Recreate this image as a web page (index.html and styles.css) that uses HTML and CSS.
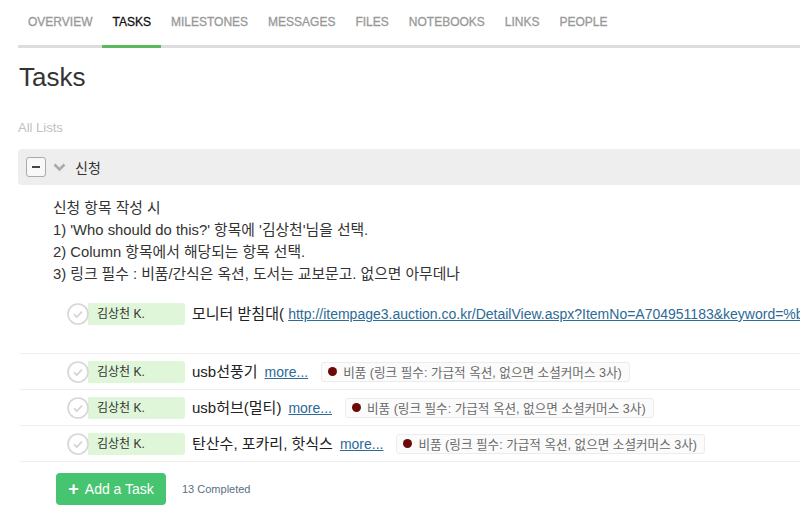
FILE: index.html
```html
<!DOCTYPE html>
<html lang="ko">

<head>
  <meta charset="UTF-8">
  <meta name="viewport" content="width=device-width, initial-scale=1">
  <title>Tasks</title>
  <link rel="stylesheet" href="styles.css">
</head>

<body>

  <nav class="tabs">
    <a class="tab">Overview</a>
    <a class="tab active">Tasks</a>
    <a class="tab">Milestones</a>
    <a class="tab">Messages</a>
    <a class="tab">Files</a>
    <a class="tab">Notebooks</a>
    <a class="tab">Links</a>
    <a class="tab">People</a>
  </nav>

  <h1 class="page-title">Tasks</h1>
  <p class="all-lists">All Lists</p>

  <div class="list-head">
    <span class="toggle"><span></span></span>
    <svg class="chevron" width="13" height="9" viewBox="0 0 13 9">
      <path d="M1.5 1.5 L6.5 6.5 L11.5 1.5" fill="none" stroke="#aaa" stroke-width="2.6" />
    </svg>
    <span class="list-name">신청</span>
  </div>

  <div class="list-desc">
    <p>신청 항목 작성 시</p>
    <p>1) 'Who should do this?' 항목에 '김상천'님을 선택.</p>
    <p>2) Column 항목에서 해당되는 항목 선택.</p>
    <p>3) 링크 필수 : 비품/간식은 옥션, 도서는 교보문고. 없으면 아무데나</p>
  </div>

  <ul class="tasks">
    <li class="task first">
      <span class="check">
        <svg width="22" height="22" viewBox="0 0 22 22">
          <circle cx="11" cy="11" r="10" fill="#fff" stroke="#d6d6d6" stroke-width="1.6" />
          <path d="M7 11.3 L9.8 14 L15 8.6" fill="none" stroke="#d4d4d4" stroke-width="1.8" />
        </svg>
      </span>
      <span class="who">김상천 K.</span>
      <span class="title">모니터 받침대( <a class="url" href="#">http://itempage3.auction.co.kr/DetailView.aspx?ItemNo=A704951183&amp;keyword=%b8</a></span>
    </li>
    <li class="task">
      <span class="check">
        <svg width="22" height="22" viewBox="0 0 22 22">
          <circle cx="11" cy="11" r="10" fill="#fff" stroke="#d6d6d6" stroke-width="1.6" />
          <path d="M7 11.3 L9.8 14 L15 8.6" fill="none" stroke="#d4d4d4" stroke-width="1.8" />
        </svg>
      </span>
      <span class="who">김상천 K.</span>
      <span class="title">usb선풍기</span>
      <a class="more" href="#">more...</a>
      <span class="label"><i></i>비품 (링크 필수: 가급적 옥션, 없으면 소셜커머스 3사)</span>
    </li>
    <li class="task">
      <span class="check">
        <svg width="22" height="22" viewBox="0 0 22 22">
          <circle cx="11" cy="11" r="10" fill="#fff" stroke="#d6d6d6" stroke-width="1.6" />
          <path d="M7 11.3 L9.8 14 L15 8.6" fill="none" stroke="#d4d4d4" stroke-width="1.8" />
        </svg>
      </span>
      <span class="who">김상천 K.</span>
      <span class="title">usb허브(멀티)</span>
      <a class="more" href="#">more...</a>
      <span class="label"><i></i>비품 (링크 필수: 가급적 옥션, 없으면 소셜커머스 3사)</span>
    </li>
    <li class="task">
      <span class="check">
        <svg width="22" height="22" viewBox="0 0 22 22">
          <circle cx="11" cy="11" r="10" fill="#fff" stroke="#d6d6d6" stroke-width="1.6" />
          <path d="M7 11.3 L9.8 14 L15 8.6" fill="none" stroke="#d4d4d4" stroke-width="1.8" />
        </svg>
      </span>
      <span class="who">김상천 K.</span>
      <span class="title">탄산수, 포카리, 핫식스</span>
      <a class="more" href="#">more...</a>
      <span class="label"><i></i>비품 (링크 필수: 가급적 옥션, 없으면 소셜커머스 3사)</span>
    </li>
  </ul>

  <div class="list-foot">
    <button class="add-task"><span class="plus">+</span> Add a Task</button>
    <span class="completed">13 Completed</span>
  </div>

</body>

</html>
```

FILE: styles.css
```css
* {
  box-sizing: border-box;
  margin: 0;
  padding: 0;
}

body {
  font-family: "Liberation Sans", "Noto Sans CJK KR", sans-serif;
  color: #333;
  background: #fff;
  width: 800px;
  overflow: hidden;
}

/* project tabs */
.tabs {
  display: flex;
  margin-left: 18px;
  border-bottom: 3px solid #ddd;
  height: 48px;
}

.tab {
  padding: 0 10px;
  line-height: 45px;
  font-size: 12px;
  text-transform: uppercase;
  color: #999;
  border-bottom: 3px solid transparent;
  margin-bottom: -3px;
  -webkit-text-stroke: 0.3px #999;
}

.tab.active {
  color: #111;
  -webkit-text-stroke: 0.3px #111;
  border-bottom-color: #5cb85c;
}

.page-title {
  font-size: 26px;
  font-weight: normal;
  color: #333;
  margin: 13px 0 0 19px;
  line-height: 32px;
}

.all-lists {
  font-size: 13px;
  color: #c0c0c0;
  margin: 27px 0 0 18px;
}

/* list header bar */
.list-head {
  display: flex;
  align-items: center;
  height: 36px;
  margin: 14px 0 0 18px;
  padding-left: 8px;
  background: #eee;
  border-radius: 4px 0 0 4px;
}

.toggle {
  width: 20px;
  height: 20px;
  border: 1px solid #aaa;
  border-radius: 3px;
  background: #f8f8f8;
  display: flex;
  align-items: center;
  justify-content: center;
}

.toggle span {
  width: 8px;
  height: 2px;
  background: #444;
}

.chevron {
  margin-left: 7px;
}

.list-name {
  margin-left: 9px;
  font-size: 14px;
  color: #333;
}

.list-desc {
  margin: 12px 0 0 53px;
  font-size: 14.8px;
  line-height: 22px;
  color: #333;
}

/* task rows */
.tasks {
  list-style: none;
  margin: 11px 0 0 20px;
}

.task {
  display: flex;
  align-items: center;
  height: 36px;
  padding-left: 47px;
  border-bottom: 1px solid #efefef;
  white-space: nowrap;
  overflow: hidden;
}

.task.first {
  height: 58px;
  align-items: flex-start;
  padding-top: 7px;
}

.check {
  flex-shrink: 0;
  width: 22px;
  height: 22px;
  position: relative;
  z-index: 1;
}

.check svg {
  display: block;
}

.who {
  flex-shrink: 0;
  display: block;
  width: 97px;
  height: 22px;
  line-height: 22px;
  margin-left: -1px;
  padding-left: 9px;
  font-size: 12px;
  color: #333;
  background: #dff7d8;
  border-radius: 0 3px 3px 0;
}

.title {
  flex-shrink: 0;
  margin-left: 7px;
  font-size: 15px;
  color: #222;
  line-height: 22px;
}

.url {
  font-size: 14px;
  color: #2d6a96;
}

.more {
  flex-shrink: 0;
  margin-left: 7px;
  font-size: 14px;
  color: #2d6a96;
}

.label {
  flex-shrink: 0;
  display: flex;
  align-items: center;
  height: 20px;
  margin-left: 13px;
  padding: 0 7px 0 6px;
  font-size: 12.6px;
  color: #6a6a6a;
  background: #fbfbfb;
  border: 1px solid #ececec;
  border-radius: 3px;
}

.label i {
  width: 9px;
  height: 9px;
  margin-right: 6px;
  border-radius: 50%;
  background: #6b0808;
}

/* footer */
.list-foot {
  display: flex;
  align-items: center;
  margin: 11px 0 0 56px;
}

.add-task {
  width: 110px;
  height: 32px;
  border: none;
  border-radius: 4px;
  background: #46c46f;
  color: #fff;
  font-family: inherit;
  font-size: 14px;
}

.plus {
  font-weight: bold;
  font-size: 18px;
  vertical-align: -1px;
  margin-right: 3px;
}

.completed {
  margin-left: 16px;
  font-size: 11px;
  color: #5b6e84;
}
```
